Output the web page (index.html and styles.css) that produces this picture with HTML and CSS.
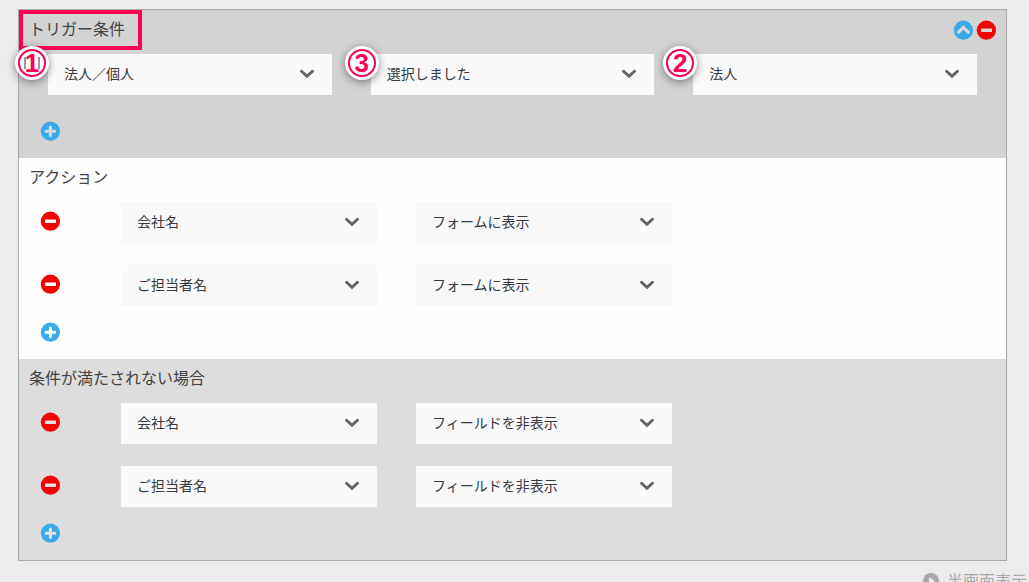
FILE: index.html
```html
<!DOCTYPE html>
<html lang="ja">
<head>
<meta charset="utf-8">
<meta name="viewport" content="width=device-width, initial-scale=1">
<title>トリガー条件</title>
<link rel="stylesheet" href="styles.css">
</head>
<body>
<svg class="defs" aria-hidden="true">
  <symbol id="minus" viewBox="0 0 20 20"><circle cx="10.4" cy="10.2" r="9.6" fill="#f80000"/><rect x="5" y="8.6" width="11" height="3.4" rx=".6" fill="currentColor"/></symbol>
  <symbol id="plus" viewBox="0 0 20 20"><circle cx="10.4" cy="10.2" r="9.6" fill="#3aabe8"/><path d="M10.4 5.9v8.6M6.1 10.2h8.6" stroke="currentColor" stroke-width="3" stroke-linecap="round"/></symbol>
  <symbol id="up" viewBox="0 0 20 20"><circle cx="10.4" cy="10.2" r="9.6" fill="#3aabe8"/><path d="M5.6 12.1 10.4 7.4l4.8 4.7" fill="none" stroke="currentColor" stroke-width="3.2" stroke-linecap="round"/></symbol>
  <symbol id="down" viewBox="0 0 16 10"><path d="M2.5 2.2 8 7.3l5.5-5.1" fill="none" stroke="#636363" stroke-width="2.9" stroke-linecap="round"/></symbol>
</svg>
<main class="page">
  <form class="panel">
    <section class="section trigger">
      <header class="head">
        <h2 class="title marked">トリガー条件</h2>
        <div class="tools">
          <button type="button" class="icon" aria-label="折りたたむ"><svg><use href="#up"/></svg></button>
          <button type="button" class="icon" aria-label="条件を削除"><svg><use href="#minus"/></svg></button>
        </div>
      </header>
      <div class="conditions">
        <div class="field"><select aria-label="項目"><option>法人／個人</option></select><svg class="arrow"><use href="#down"/></svg><span class="badge first">1</span></div>
        <div class="field"><select aria-label="状態"><option>選択しました</option></select><svg class="arrow"><use href="#down"/></svg><span class="badge third">3</span></div>
        <div class="field"><select aria-label="値"><option>法人</option></select><svg class="arrow"><use href="#down"/></svg><span class="badge second">2</span></div>
      </div>
      <button type="button" class="icon add" aria-label="条件を追加"><svg><use href="#plus"/></svg></button>
    </section>
    <section class="section action">
      <header class="head"><h2 class="title">アクション</h2></header>
      <div class="rows">
        <div class="row">
          <button type="button" class="icon" aria-label="削除"><svg><use href="#minus"/></svg></button>
          <div class="fields">
            <div class="field"><select aria-label="対象"><option>会社名</option></select><svg class="arrow"><use href="#down"/></svg></div>
            <div class="field"><select aria-label="動作"><option>フォームに表示</option></select><svg class="arrow"><use href="#down"/></svg></div>
          </div>
        </div>
        <div class="row">
          <button type="button" class="icon" aria-label="削除"><svg><use href="#minus"/></svg></button>
          <div class="fields">
            <div class="field"><select aria-label="対象"><option>ご担当者名</option></select><svg class="arrow"><use href="#down"/></svg></div>
            <div class="field"><select aria-label="動作"><option>フォームに表示</option></select><svg class="arrow"><use href="#down"/></svg></div>
          </div>
        </div>
      </div>
      <button type="button" class="icon add" aria-label="アクションを追加"><svg><use href="#plus"/></svg></button>
    </section>
    <section class="section otherwise">
      <header class="head"><h2 class="title">条件が満たされない場合</h2></header>
      <div class="rows">
        <div class="row">
          <button type="button" class="icon" aria-label="削除"><svg><use href="#minus"/></svg></button>
          <div class="fields">
            <div class="field"><select aria-label="対象"><option>会社名</option></select><svg class="arrow"><use href="#down"/></svg></div>
            <div class="field"><select aria-label="動作"><option>フィールドを非表示</option></select><svg class="arrow"><use href="#down"/></svg></div>
          </div>
        </div>
        <div class="row">
          <button type="button" class="icon" aria-label="削除"><svg><use href="#minus"/></svg></button>
          <div class="fields">
            <div class="field"><select aria-label="対象"><option>ご担当者名</option></select><svg class="arrow"><use href="#down"/></svg></div>
            <div class="field"><select aria-label="動作"><option>フィールドを非表示</option></select><svg class="arrow"><use href="#down"/></svg></div>
          </div>
        </div>
      </div>
      <button type="button" class="icon add" aria-label="アクションを追加"><svg><use href="#plus"/></svg></button>
    </section>
  </form>
  <button type="button" class="half">
    <svg viewBox="0 0 16 16" aria-hidden="true"><circle cx="8" cy="8" r="8" fill="#a8a8a8"/><path d="M6 4v8l6-4z" fill="#ebecee"/></svg>
    半画面表示
  </button>
</main>
</body>
</html>
```
FILE: styles.css
```css
* {
  box-sizing: border-box;
}

body {
  margin: 0;
  overflow: hidden;
  background: #ebecee;
  color: #444;
  font-family: "Noto Sans CJK JP", sans-serif;
  font-size: 14px;
}

button {
  padding: 0;
  border: 0;
  background: none;
  color: inherit;
  font: inherit;
  cursor: pointer;
}

.defs {
  display: none;
}

.page {
  display: flex;
  flex-direction: column;
  padding-top: 9px;
}

.panel {
  margin: 0 22px 0 18px;
  border: 1px solid #a8a9ab;
}

.section {
  display: flex;
  flex-direction: column;
  padding-bottom: 17px;
}

.trigger {
  background: #d3d3d3;
}

.action {
  background: #fefefe;
}

.otherwise {
  background: #ddd;
}

.head {
  display: flex;
  align-items: flex-start;
  justify-content: space-between;
  height: 44px;
  padding: 0 10px;
}

.title {
  position: relative;
  margin: 0;
  font-size: 16px;
  font-weight: 400;
  line-height: 36px;
}

.marked::after {
  content: "";
  position: absolute;
  inset: 0 -17px -4px -10px;
  border: 4px solid #ff0050;
}

.tools {
  display: flex;
  gap: 3px;
  padding-top: 10px;
}

.icon {
  display: block;
  flex: none;
  width: 20px;
  height: 20px;
  color: #fff;
}

.icon svg {
  display: block;
  width: 100%;
  height: 100%;
}

.trigger .icon {
  color: #d8d8d8;
}

.otherwise .icon {
  color: #e4e4e4;
}

.add {
  margin: 16px 0 0 21px;
}

.conditions {
  display: grid;
  grid-template-columns: repeat(3, 1fr);
  gap: 39px;
  padding: 0 29px 10px;
}

.rows {
  display: grid;
  gap: 22px;
  padding: 0 39px 0 21px;
}

.row {
  display: flex;
  align-items: flex-start;
  gap: 61px;
}

.row .icon {
  margin-top: 9px;
}

.fields {
  display: grid;
  flex: 1;
  grid-template-columns: repeat(3, 1fr);
  gap: 39px;
}

.field {
  position: relative;
}

select {
  display: block;
  width: 100%;
  height: 41px;
  padding: 0 48px 3px 16px;
  border: 0;
  border-radius: 0;
  appearance: none;
  background: #f9f9f9;
  color: #343a40;
  font: inherit;
}

.arrow {
  position: absolute;
  top: 15px;
  right: 17px;
  width: 16px;
  height: 10px;
  pointer-events: none;
}

.badge {
  position: absolute;
  top: -8px;
  left: -33px;
  display: grid;
  place-items: center;
  width: 34px;
  height: 34px;
  border-radius: 50%;
  background: #fff;
  box-shadow: 0 2px 9px rgba(0, 0, 0, 0.45);
  color: #ff0050;
  font: bold 26px/28px "Liberation Sans", "Noto Sans CJK JP", sans-serif;
}

.badge::before {
  content: "";
  position: absolute;
  inset: 3px;
  border: 2px solid #ff0050;
  border-radius: 50%;
}

.first::after {
  content: "";
  position: absolute;
  inset: 11px 9px;
  border: solid #999;
  border-width: 0 2px;
  z-index: -1;
}

.first {
  z-index: 0;
}

.second {
  left: -30px;
}

.third {
  left: -26px;
}

.half {
  display: flex;
  align-items: flex-start;
  align-self: flex-end;
  gap: 8px;
  margin: 11px 2px 0 0;
  color: #a8a8a8;
  font-size: 16px;
  line-height: 16px;
}

.half svg {
  width: 16px;
  height: 16px;
  margin-top: 1px;
}
```
